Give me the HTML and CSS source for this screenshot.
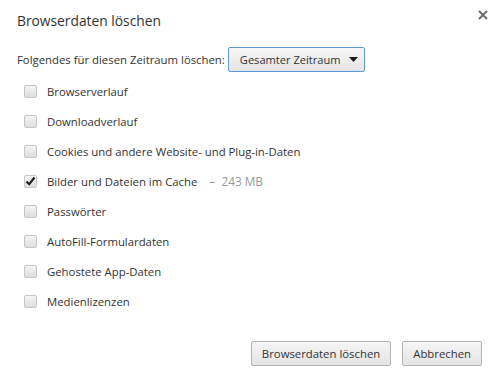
FILE: index.html
```html
<!DOCTYPE html>
<html>
<head>
    <title>Browserdaten löschen</title>
    <meta charset="UTF-8">
    <link rel="stylesheet" href="styles.css">
</head>
<body>
<section class="dialog">
    <header class="dialog-head">
        <h1 class="title">Browserdaten löschen</h1>
        <button class="close" type="button" aria-label="Schließen">
            <svg width="10" height="10" viewBox="0 0 10 10"><path d="M1 1L9 9M9 1L1 9" stroke="#6e6e6e" stroke-width="2"/></svg>
        </button>
    </header>
    <div class="period">
        <span>Folgendes für diesen Zeitraum löschen:</span>
        <div class="select">
            <span>Gesamter Zeitraum</span>
            <svg width="9" height="5" viewBox="0 0 9 5"><path d="M0 0H9L4.5 5Z" fill="#1a1a1a"/></svg>
        </div>
    </div>
    <ul class="options">
        <li><span class="box"></span>Browserverlauf</li>
        <li><span class="box"></span>Downloadverlauf</li>
        <li><span class="box"></span>Cookies und andere Website- und Plug-in-Daten</li>
        <li><span class="box checked"><svg width="11" height="10" viewBox="0 0 11 10"><path d="M1.5 5.5L4.2 8.2L9.5 1.5" stroke="#222" stroke-width="2.2" fill="none"/></svg></span>Bilder und Dateien im Cache <span class="size">&ndash;&nbsp; 243 MB</span></li>
        <li><span class="box"></span>Passwörter</li>
        <li><span class="box"></span>AutoFill-Formulardaten</li>
        <li><span class="box"></span>Gehostete App-Daten</li>
        <li><span class="box"></span>Medienlizenzen</li>
    </ul>
    <footer class="actions">
        <button type="button" class="btn">Browserdaten löschen</button>
        <button type="button" class="btn">Abbrechen</button>
    </footer>
</section>
</body>
</html>
```

FILE: styles.css
```css
body {
    margin: 0;
    background: #fff;
    font-family: "Open Sans", "Noto Sans", sans-serif;
    font-size: 11.35px;
    color: #333;
}

.dialog {
    display: flex;
    flex-direction: column;
    height: 378px;
    box-sizing: border-box;
    padding: 0 17px 0 17px;
}

.dialog-head {
    display: flex;
    justify-content: space-between;
    align-items: flex-start;
    height: 46px;
}

.title {
    margin: 11px 0 0 0;
    font-size: 13.8px;
    font-weight: normal;
    color: #333;
}

.close {
    border: none;
    background: none;
    padding: 0;
    margin: 8px -6px 0 0;
    width: 10px;
    height: 10px;
}

.period {
    display: flex;
    align-items: center;
    gap: 3px;
    height: 26px;
    white-space: nowrap;
}

.select {
    display: flex;
    align-items: center;
    justify-content: space-between;
    width: 137px;
    height: 25px;
    box-sizing: border-box;
    padding: 0 6px 0 11px;
    border: 1px solid #5b9bd5;
    border-radius: 2px;
    background: linear-gradient(#f6f6f6, #e5e5e5);
    color: #333;
    font-size: 11.1px;
}

.options {
    list-style: none;
    margin: 4px 0 0 0;
    padding: 0 0 0 7px;
}

.options li {
    display: flex;
    align-items: center;
    height: 30px;
    white-space: nowrap;
}

.box {
    display: flex;
    align-items: center;
    justify-content: center;
    width: 13px;
    height: 13px;
    box-sizing: border-box;
    border: 1px solid #c6c6c6;
    border-radius: 2px;
    background: linear-gradient(#f4f4f4, #dedede);
    margin-right: 10px;
}

.size {
    color: #999;
    margin-left: 12px;
    font-size: 11.8px;
}

.actions {
    display: flex;
    justify-content: flex-end;
    gap: 11px;
    margin-top: auto;
    margin-bottom: 12px;
}

.btn {
    height: 25px;
    padding: 0 10px;
    font-family: inherit;
    font-size: 11.35px;
    color: #333;
    border: 1px solid #b3b3b3;
    border-radius: 2px;
    background: linear-gradient(#f6f6f6, #e4e4e4);
}
```
